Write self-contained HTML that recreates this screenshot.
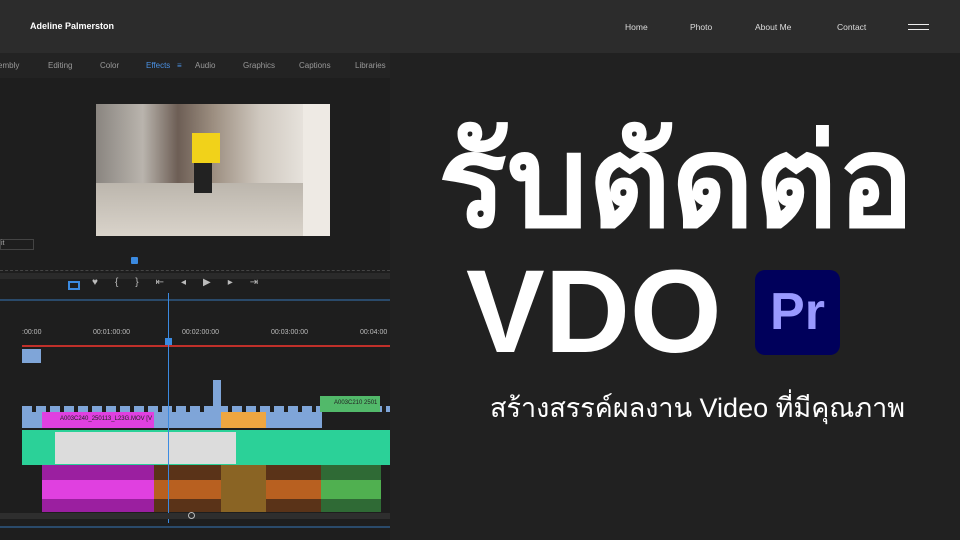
<!DOCTYPE html>
<html><head><meta charset="utf-8"><style>
*{margin:0;padding:0;box-sizing:border-box}
body{width:960px;height:540px;overflow:hidden;background:#212121;font-family:"Liberation Sans",sans-serif;position:relative}
.hd{position:absolute;left:0;top:0;width:960px;height:53px;background:#2c2c2c}
.hd .b{position:absolute;left:30px;top:21px;color:#fff;font-size:9px;font-weight:bold}
.hd .n{position:absolute;top:22px;color:#ddd;font-size:8.5px}
.ham{position:absolute;left:908px;top:24px;width:21px;height:6px;border-top:1.5px solid #eee;border-bottom:1.5px solid #eee}
.p{position:absolute;left:0;top:53px;width:390px;height:487px;background:#1e1e1e;overflow:hidden}
.a{position:absolute}
.tab{position:absolute;top:8px;font-size:8px;color:#999}
.tl{position:absolute;top:276px;color:#bbb;font-size:7px;white-space:nowrap}
.big{position:absolute;color:#fff;font-weight:bold;font-family:"DejaVu Sans",sans-serif}
</style></head><body>
<div class="hd"><div class="b">Adeline Palmerston</div>
<div class="n" style="left:625px">Home</div><div class="n" style="left:690px">Photo</div><div class="n" style="left:755px">About Me</div><div class="n" style="left:837px">Contact</div><div class="ham"></div></div>
<div class="p">
<div class="a" style="left:0;top:0;width:390px;height:25px;background:#232323"></div>
<div class="tab" style="left:-2px">embly</div><div class="tab" style="left:48px">Editing</div><div class="tab" style="left:100px">Color</div><div class="tab" style="left:146px;color:#4a90e2">Effects&nbsp;&nbsp;&nbsp;≡</div><div class="tab" style="left:195px">Audio</div><div class="tab" style="left:243px">Graphics</div><div class="tab" style="left:299px">Captions</div><div class="tab" style="left:355px">Libraries</div>
<div class="a" style="left:96px;top:51px;width:234px;height:132px;background:linear-gradient(90deg,#8a8580 0%,#b9b4ad 20%,#6d5e55 35%,#9c8e80 50%,#cfc8bf 70%,#e8e4de 90%,#f2f0ec 100%)"></div>
<div class="a" style="left:96px;top:130px;width:234px;height:53px;background:linear-gradient(#bcb6ad,#d9d3ca)"></div>
<div class="a" style="left:192px;top:80px;width:28px;height:30px;background:#f1d21a"></div>
<div class="a" style="left:194px;top:110px;width:18px;height:30px;background:#222"></div>
<div class="a" style="left:303px;top:51px;width:27px;height:132px;background:#eeeae4"></div>
<div class="a" style="left:0;top:186px;width:34px;height:11px;border:1px solid #444;color:#aaa;font-size:7px">it</div>
<div class="a" style="left:0;top:210px;width:390px;height:8px;border-bottom:1px dashed #444"></div>
<div class="a" style="left:131px;top:204px;width:7px;height:7px;background:#3b8ae0;border-radius:1px"></div>
<div class="a" style="left:0;top:220px;width:390px;height:6px;background:#2a2a2a"></div>
<div class="a" style="left:68px;top:228px;width:12px;height:9px;border:2px solid #3b8ae0"></div>
<div class="a" style="left:92px;top:224px;color:#bbb;font-size:10px;letter-spacing:17px;white-space:nowrap">♥{}⇤◂▶▸⇥</div>
<div class="a" style="left:0;top:246px;width:390px;height:2px;background:#2a4a6a"></div>
<div class="tl" style="left:22px">:00:00</div><div class="tl" style="left:93px">00:01:00:00</div><div class="tl" style="left:182px">00:02:00:00</div><div class="tl" style="left:271px">00:03:00:00</div><div class="tl" style="left:360px">00:04:00</div>
<div class="a" style="left:22px;top:292px;width:368px;height:2px;background:#c0302a"></div>
<div class="a" style="left:165px;top:285px;width:7px;height:7px;background:#3b8ae0"></div>
<div class="a" style="left:22px;top:296px;width:19px;height:14px;background:#7fa5d8"></div>
<div class="a" style="left:22px;top:353px;width:368px;height:6px;background:repeating-linear-gradient(90deg,#7fa5d8 0 10px,#1e1e1e 10px 14px)"></div>
<div class="a" style="left:213px;top:327px;width:8px;height:32px;background:#7fa5d8"></div>
<div class="a" style="left:320px;top:343px;width:60px;height:16px;background:#52b96a;color:#222;font-size:6px;padding:4px 0 0 14px">A003C210 2501</div>
<div class="a" style="left:22px;top:359px;width:300px;height:16px;background:#7fa5d8"></div>
<div class="a" style="left:42px;top:359px;width:112px;height:16px;background:#e040e0;color:#222;font-size:6px;padding:4px 0 0 18px">A003C240_250113_L23G.MOV [V</div>
<div class="a" style="left:221px;top:359px;width:45px;height:16px;background:#efa640"></div>
<div class="a" style="left:22px;top:377px;width:368px;height:35px;background:#2bd198"></div>
<div class="a" style="left:55px;top:379px;width:181px;height:32px;background:#dcdcdc"></div>
<div class="a" style="left:42px;top:412px;width:112px;height:47px;background:#9b1fa0"></div>
<div class="a" style="left:42px;top:427px;width:112px;height:19px;background:#e040e0"></div>
<div class="a" style="left:154px;top:412px;width:167px;height:47px;background:#5a3318"></div>
<div class="a" style="left:154px;top:427px;width:167px;height:19px;background:#b86020"></div>
<div class="a" style="left:221px;top:412px;width:45px;height:47px;background:#8a6424"></div>
<div class="a" style="left:321px;top:412px;width:60px;height:47px;background:#2f6a35"></div>
<div class="a" style="left:321px;top:427px;width:60px;height:19px;background:#50b050"></div>
<div class="a" style="left:168px;top:240px;width:1px;height:230px;background:#3b8ae0"></div>
<div class="a" style="left:0;top:460px;width:390px;height:6px;background:#2e2e2e"></div>
<div class="a" style="left:188px;top:459px;width:7px;height:7px;border:1px solid #bbb;border-radius:50%"></div>
<div class="a" style="left:0;top:473px;width:390px;height:2px;background:#2a4a6a"></div>
</div>
<div class="big" style="left:438px;top:80px;font-size:128px;letter-spacing:0px;white-space:nowrap">รับตัดต่อ</div>
<div class="big" style="left:466px;top:244px;font-size:118px;font-family:'Liberation Sans',sans-serif">VDO</div>
<div class="a" style="left:755px;top:270px;width:85px;height:85px;background:#00005b;border-radius:10px;color:#9999ff;font-size:52px;font-weight:bold;text-align:center;line-height:85px">Pr</div>
<div class="a" style="left:490px;top:386px;color:#fff;font-size:27px;white-space:nowrap">สร้างสรรค์ผลงาน Video ที่มีคุณภาพ</div>
</body></html>
